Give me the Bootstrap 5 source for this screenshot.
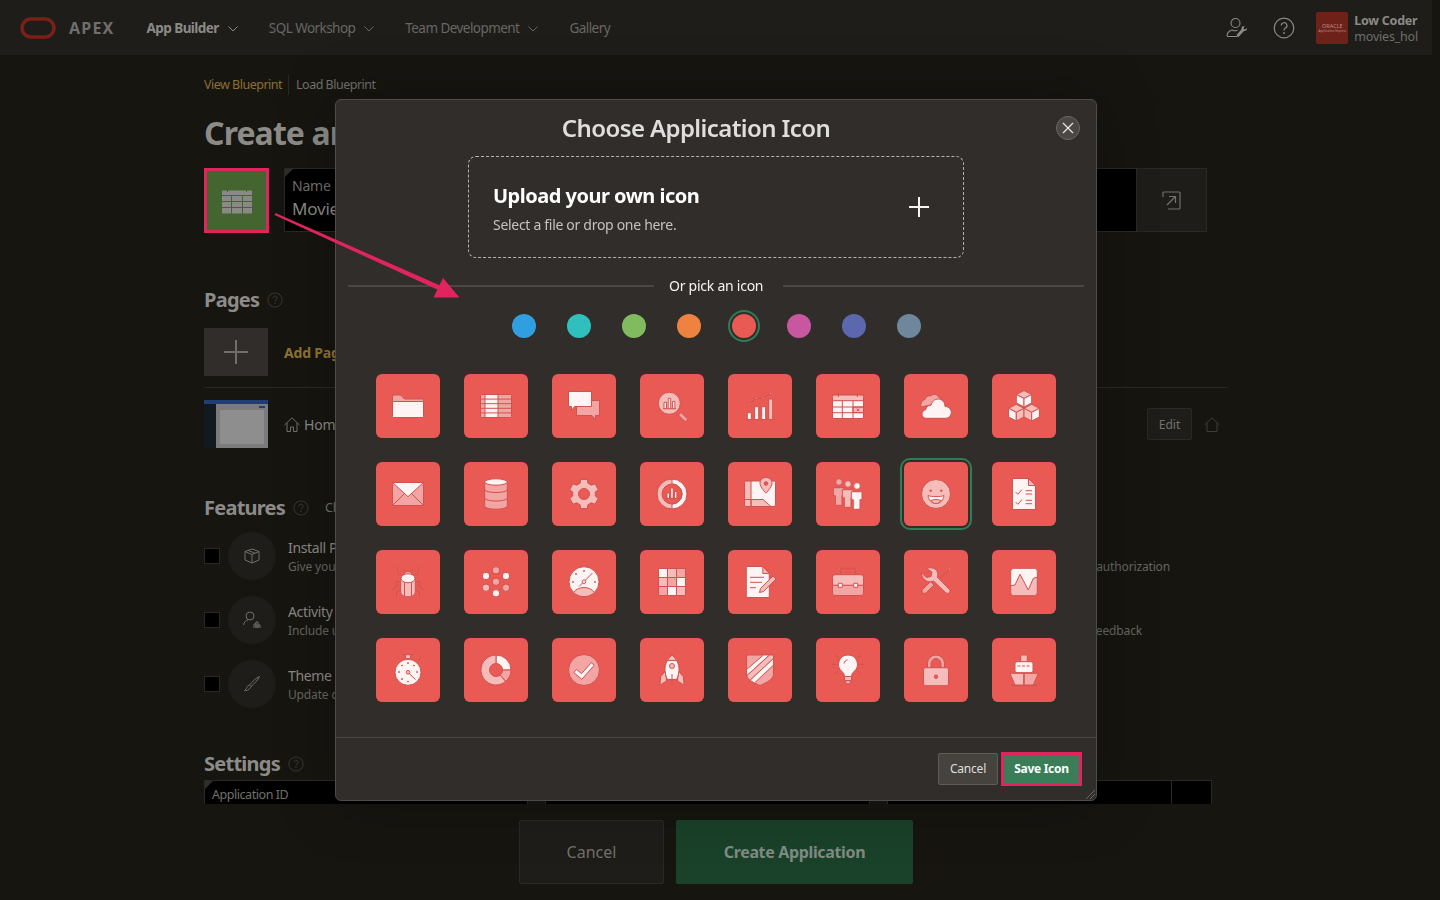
<!DOCTYPE html>
<html lang="en">
<head>
    <meta charset="UTF-8">
    <title>Create an Application</title>
    <link href="https://cdn.jsdelivr.net/npm/bootstrap@5.3.0/dist/css/bootstrap.min.css" rel="stylesheet">
    <style>
        html, body { height: 100%; }
        body { background: #161510; font-family: "Noto Sans", "Liberation Sans", sans-serif; color: #8a8985; overflow: hidden; }
        .shell { width: 1432px; height: 900px; }

        /* top bar */
        .top-bar { height: 55px; background: #1e1d1a; padding: 1px 14px 0 20px; }
        .apex-word { font-size: 16px; font-weight: 700; letter-spacing: 1.2px; color: #6f6e6a; margin: 0 32px 0 13px; }
        .top-item { font-size: 13.5px; color: #686763; letter-spacing: -.55px; }
        .top-item.is-active { color: #8b8a86; font-weight: 700; letter-spacing: -.55px; }
        .top-nav { gap: 31px; }
        .top-item svg { margin-left: 9px; }
        .wrench-icon { margin-right: 25px; }
        .help-icon { margin-right: 21px; color: #8a8985; }
        .user-name { font-size: 12.5px; font-weight: 700; line-height: 17px; color: #8b8a86; letter-spacing: -.25px; }
        .user-app { font-size: 12.5px; line-height: 16px; color: #6f6e6a; letter-spacing: -.2px; }
        .org-badge { width: 32px; height: 32px; margin-right: 6px; background: #6e2119; border-radius: 2px; color: #b98f8a; }
        .org-top { font-size: 5.5px; line-height: 5px; }
        .org-bot { font-size: 3px; line-height: 4px; }

        /* dimmed page behind the dialog */
        .page-main { height: 749px; overflow: hidden; padding: 0 204px; }
        .tab-row { margin-top: 20px; height: 20px; font-size: 12.5px; line-height: 20px; letter-spacing: -.5px; }
        .tab-on { color: #8c7130; padding-right: 6px; border-right: 1px solid #2a2925; margin-right: 7px; }
        .tab-off { color: #72716d; }
        .page-title { margin: 18px 0 15px; font-size: 32px; line-height: 40px; font-weight: 700; color: #8c8b88; letter-spacing: -.9px; }
        .app-icon { width: 65px; height: 65px; background: #44652f; border: 3px solid #e0245e; }
        .black-field { position: relative; background: #000; border: 1px solid #2a2925; padding: 7px; }
        .black-field::before { content: ""; position: absolute; top: 0; left: 0; border-style: solid; border-width: 8px 8px 0 0; border-color: #2f2e2b transparent transparent transparent; }
        .name-field { width: 853px; height: 64px; margin-left: 15px; }
        .field-label { font-size: 14px; line-height: 20px; color: #72716d; letter-spacing: -.2px; }
        .field-value { font-size: 17px; line-height: 26px; color: #8a8985; letter-spacing: -.2px; }
        .pop-btn { width: 70px; height: 64px; background: #1e1d1a; border: 1px solid #2a2925; border-left: 0; }
        .sect-head { font-size: 20px; line-height: 28px; font-weight: 700; color: #8c8b88; letter-spacing: -.75px; }
        .pages-head { margin-top: 53px; }
        .add-row { margin-top: 14px; }
        .add-tile { width: 64px; height: 48px; background: #312d2a; }
        .add-link { margin-left: 16px; font-size: 14px; font-weight: 700; color: #8f742f; letter-spacing: -.2px; }
        .row-line { margin: 11px 0 12px; border-top: 1px solid #2a2925; }
        .thumb { width: 64px; height: 48px; background: #7b7b7b; border-top: 4px solid #1f3e72; padding: 6px 4px 4px 16px; position: relative; }
        .thumb::before { content: ""; position: absolute; left: 0; top: 0; bottom: 0; width: 12px; background: #121a20; }
        .thumb::after { content: ""; position: absolute; right: 3px; top: 2px; width: 6px; height: 2px; background: #1f3e72; }
        .thumb-inner { display: block; height: 100%; background: #8e8e8e; }
        .home-name { font-size: 14px; color: #8a8985; margin-left: 4px; letter-spacing: -.2px; }
        .edit-btn { width: 45px; height: 32px; background: #1e1d1a; border: 1px solid #2a2925; border-radius: 2px; font-size: 12px; line-height: 31px; text-align: center; color: #72716d; margin-right: 12px; }
        .features-head { margin-top: 46px; margin-bottom: 10px; }
        .check-all { font-size: 12.5px; font-weight: 400; color: #72716d; margin-left: 16px; letter-spacing: -.2px; }
        .feature-row { height: 48px; margin-bottom: 16px; }
        .fake-check { width: 16px; height: 16px; background: #000; border: 1px solid #2a2925; margin-right: 8px; }
        .feat-circle { width: 48px; height: 48px; border-radius: 50%; background: #1e1d1a; margin-right: 12px; }
        .feat-title { font-size: 14px; line-height: 20px; color: #8a8985; margin-top: 2px; letter-spacing: -.35px; }
        .feat-sub { font-size: 12px; line-height: 18px; color: #666561; letter-spacing: -.15px; }
        .end-a { margin-right: 58px; }
        .end-b { margin-right: 86px; }
        .settings-head { margin-top: 42px; margin-bottom: 2px; }
        .settings-row { margin-right: 16px; }
        .settings-field { height: 64px; font-size: 12.5px; color: #72716d; padding: 5px 7px; letter-spacing: -.45px; }
        .seg-a { width: 324px; margin-right: 17px; }
        .seg-b { width: 325px; margin-right: 17px; }
        .seg-c { width: 285px; }
        .seg-d { width: 40px; border-left: 0; }
        .seg-d::before { display: none; }
        .page-foot { height: 96px; padding-top: 16px; gap: 12px; }
        .foot-cancel { width: 145px; height: 64px; background: #1e1d1a; border: 1px solid #2a2925; border-radius: 2px; font-size: 16px; line-height: 62px; text-align: center; color: #72716d; }
        .foot-create { width: 237px; height: 64px; background: #1a412a; border-radius: 2px; font-size: 16px; font-weight: 700; line-height: 64px; text-align: center; color: #7f8b83; letter-spacing: -.35px; }

        /* dialog */
        .dlg-box { max-width: 762px; width: 762px; margin: 99px 0 0 335px; }
        .dlg-box .modal-content { height: 702px; background: #312d2a; border: 1px solid #4e4b48; border-radius: 6px; box-shadow: 0 0 60px rgba(0,0,0,.25); color: #fff; }
        .dlg-head { height: 56px; padding: 0 16px 0 0; border: 0; }
        .dlg-title { flex: 1; text-align: center; font-size: 24px; font-weight: 600; line-height: 32px; color: #dfdedc; letter-spacing: -.6px; margin: 0; }
        .dlg-close { width: 24px; height: 24px; padding: 0; border-radius: 50%; background: #4a4744; border: 1px solid #6b6865; }
        .upload-box { width: 496px; height: 102px; margin: 0 auto; border: 1px dashed #b5b3b0; border-radius: 8px; padding: 0 33px 0 24px; }
        .upload-copy { padding-top: 2px; }
        .upload-title { font-size: 20px; line-height: 28px; font-weight: 700; color: #fff; letter-spacing: -.5px; }
        .upload-sub { font-size: 14px; line-height: 20px; color: #c4c2bf; letter-spacing: -.3px; margin-top: 5px; }
        .or-row { margin: 16px 12px 0 12px; height: 24px; }
        .or-line { flex: 1; height: 2px; background: #4a4744; }
        .or-line-left { flex: 0 0 306px; }
        .or-text { margin: 0 20px 0 15px; padding-bottom: 2px; font-size: 14px; color: #f5f4f3; letter-spacing: -.25px; }
        .swatches { gap: 31px; margin-top: 16px; }
        .swatch { width: 24px; height: 24px; border-radius: 50%; border: 0; padding: 0; }
        .swatch.is-on { outline: 2px solid #2f7d57; outline-offset: 2px; }
        .tile-grid { display: grid; grid-template-columns: repeat(8, 64px); gap: 24px; justify-content: center; margin-top: 36px; }
        .tile { width: 64px; height: 64px; padding: 0; border: 0; border-radius: 6px; background: #ea5a55; display: block; }
        .tile.is-on { outline: 2px solid #2f7d57; outline-offset: 2px; }
        .tile svg { display: block; }
        .tile svg * { stroke: #d0524e; stroke-width: 1; stroke-linejoin: round; }
        .fa { fill: #fdf4f3; }
        .fb { fill: #f6bcb9; }
        .fc { fill: #f2a5a2; }
        .fn { fill: none; }
        .ft { fill: #ea5a55; }
        .fd { fill: #cc4f4b; }
        .dlg-foot { height: 63px; margin-top: 35px; padding: 0 14px 1px 0; border-top: 1px solid #4a4744; border-radius: 0; gap: 3px; flex-wrap: nowrap; }
        .dlg-foot > * { margin: 0; }
        .dlg-cancel { width: 60px; height: 32px; padding: 0; background: #46433f; border: 1px solid #5f5c59; border-radius: 2px; font-size: 12px; color: #dfdedc; letter-spacing: -.2px; }
        .dlg-save { width: 81px; height: 34px; padding: 0; background: #3a7d58; border: 3px solid #e0245e; border-radius: 0; font-size: 12px; font-weight: 700; color: #fff; letter-spacing: -.3px; }
        .grip { position: absolute; right: 1px; bottom: 1px; }
        .arrow-layer { position: fixed; top: 0; left: 0; z-index: 2000; pointer-events: none; }
    </style>
</head>
<body>
    <svg width="0" height="0" class="position-absolute">
        <symbol id="help" viewBox="0 0 18 18">
            <circle cx="9" cy="9" r="8" fill="none" stroke="currentColor"/>
            <path d="M6.8 7a2.3 2.3 0 1 1 3.4 2c-.8.5-1.2 1-1.2 2" fill="none" stroke="currentColor"/>
            <circle cx="9" cy="13" r=".8" fill="currentColor"/>
        </symbol>
        <symbol id="chev" viewBox="0 0 10 6">
            <path d="M.5.5L5 5 9.5.5" fill="none" stroke="currentColor"/>
        </symbol>
    </svg>

    <div class="shell d-flex flex-column">
        <header class="top-bar d-flex align-items-center">
            <svg width="36" height="22" viewBox="0 0 36 22"><rect x="2" y="2" width="32" height="18" rx="9" fill="none" stroke="#7a2018" stroke-width="3.5"/></svg>
            <span class="apex-word">APEX</span>
            <nav class="top-nav d-flex align-items-center">
                <span class="top-item is-active">App Builder<svg width="10" height="6"><use href="#chev"/></svg></span>
                <span class="top-item">SQL Workshop<svg width="10" height="6"><use href="#chev"/></svg></span>
                <span class="top-item">Team Development<svg width="10" height="6"><use href="#chev"/></svg></span>
                <span class="top-item">Gallery</span>
            </nav>
            <div class="ms-auto d-flex align-items-center">
                <svg width="22" height="22" viewBox="0 0 22 22" fill="none" stroke="#8a8985" stroke-width="1.1" class="wrench-icon">
                    <circle cx="9.5" cy="6" r="4.5"/>
                    <path d="M1 19c0-3.5 2-5 5-6 1 .6 4 .8 5.5.2M1 19.5h10"/>
                    <path d="M12 20.5l6-6.5c1.5.4 3.5-1 3-3l-2 1.5-1.5-1 1-2.5c-2-.2-3.5 1.3-3 3.3l-5 5.7z" fill="#8a8985" stroke="none"/>
                </svg>
                <svg width="22" height="22" class="help-icon"><use href="#help"/></svg>
                <div class="org-badge d-flex flex-column justify-content-center text-center"><span class="org-top">ORACLE</span><span class="org-bot">Application Express</span></div>
                <div>
                    <div class="user-name">Low Coder</div>
                    <div class="user-app">movies_hol</div>
                </div>
            </div>
        </header>

        <main class="page-main">
            <div class="tab-row d-flex"><span class="tab-on">View Blueprint</span><span class="tab-off">Load Blueprint</span></div>
            <h1 class="page-title">Create an Application</h1>

            <div class="d-flex">
                <div class="app-icon d-flex align-items-center justify-content-center">
                    <svg width="32" height="28" viewBox="0 0 32 28" fill="#8a8985" stroke="#44652f">
                        <path d="M.5 3h31v24H.5z"/>
                        <path d="M.5 8.500h31M.5 14.500h31M.5 20.500h31M10.500 8.500V27M21.500 8.500V27M6.500 0v5M25.500 0v5"/>
                    </svg>
                </div>
                <div class="black-field name-field">
                    <div class="field-label">Name</div>
                    <div class="field-value">Movies</div>
                </div>
                <div class="pop-btn d-flex align-items-center justify-content-center">
                    <svg width="19" height="19" viewBox="0 0 19 19" fill="none" stroke="#72716d" stroke-width="1.200">
                        <path d="M1 6V2a1 1 0 0 1 1-1h15a1 1 0 0 1 1 1v15a1 1 0 0 1-1 1H6"/>
                        <path d="M5 14L13 6M7 5.500h6.500V12"/>
                    </svg>
                </div>
            </div>

            <div class="sect-head pages-head d-flex align-items-center">Pages<svg class="ms-2" width="16" height="16" style="color:#3e3d39"><use href="#help"/></svg></div>
            <div class="d-flex align-items-center add-row">
                <div class="add-tile d-flex align-items-center justify-content-center">
                    <svg width="24" height="24" viewBox="0 0 24 24" stroke="#6f6e6a" stroke-width="2"><path d="M12 0v24M0 12h24"/></svg>
                </div>
                <span class="add-link">Add Page</span>
            </div>
            <div class="row-line"></div>
            <div class="d-flex align-items-center">
                <div class="thumb"><span class="thumb-inner"></span></div>
                <svg class="ms-3" width="16" height="15" viewBox="0 0 16 15" fill="none" stroke="#72716d"><path d="M.5 8L8 .8 15.500 8M3 6v8.500h3.500V10h3v4.500H13V6"/></svg>
                <span class="home-name">Home</span>
                <span class="edit-btn ms-auto">Edit</span>
                <svg class="me-2" width="16" height="15" viewBox="0 0 16 15" fill="none" stroke="#3e3d39"><path d="M.5 8L8 .8 15.500 8M3 6v8.500h10V6"/></svg>
            </div>

            <div class="sect-head features-head d-flex align-items-center">Features<svg class="ms-2" width="16" height="16" style="color:#3e3d39"><use href="#help"/></svg><span class="check-all">Check All</span></div>

            <div class="feature-row d-flex align-items-center">
                <span class="fake-check"></span>
                <span class="feat-circle d-flex align-items-center justify-content-center">
                    <svg width="16" height="16" viewBox="0 0 16 16" fill="none" stroke="#6f6e6a"><path d="M8 1l7 2.500v8.500L8 15 1 12V3.500zM1 3.500L8 6.500 15 3.500M8 6.500V15M4 2.300l7 3"/></svg>
                </span>
                <div>
                    <div class="feat-title">Install Progressive Web App</div>
                    <div class="feat-sub">Give your application a native feel</div>
                </div>
                <div class="ms-auto end-a">
                    <div class="feat-title">Access Control</div>
                    <div class="feat-sub">Incorporate role based user authorization</div>
                </div>
            </div>
            <div class="feature-row d-flex align-items-center">
                <span class="fake-check"></span>
                <span class="feat-circle d-flex align-items-center justify-content-center">
                    <svg width="18" height="18" viewBox="0 0 18 18" fill="none" stroke="#6f6e6a"><circle cx="7" cy="5" r="4"/><path d="M.5 14c.5-3 2.500-4.500 4.500-5M11 17v-4h2v4M13 17v-6h2v6M15 17v-3h2v3"/></svg>
                </span>
                <div>
                    <div class="feat-title">Activity Reporting</div>
                    <div class="feat-sub">Include usage reports for your application</div>
                </div>
                <div class="ms-auto end-b">
                    <div class="feat-title">Feedback</div>
                    <div class="feat-sub">Provide end users with a way to give feedback</div>
                </div>
            </div>
            <div class="feature-row d-flex align-items-center">
                <span class="fake-check"></span>
                <span class="feat-circle d-flex align-items-center justify-content-center">
                    <svg width="16" height="16" viewBox="0 0 16 16" fill="none" stroke="#6f6e6a"><path d="M15.500.5C12 2 8 6 5.500 9l1.500 1.500C10 8 14 4 15.500.5zM5.500 9c-2 .5-2.500 2-3 3.500L.5 14.500c2 .5 5-.5 6.500-4"/></svg>
                </span>
                <div>
                    <div class="feat-title">Theme Style Selection</div>
                    <div class="feat-sub">Update colors and styles</div>
                </div>
            </div>

            <div class="sect-head settings-head d-flex align-items-center">Settings<svg class="ms-2" width="16" height="16" style="color:#3e3d39"><use href="#help"/></svg></div>
            <div class="settings-row d-flex">
                <div class="black-field settings-field seg-a">Application ID</div>
                <div class="black-field settings-field seg-b"></div>
                <div class="black-field settings-field seg-c"></div>
                <div class="black-field settings-field seg-d"></div>
            </div>
        </main>

        <footer class="page-foot d-flex justify-content-center">
            <div class="foot-cancel">Cancel</div>
            <div class="foot-create">Create Application</div>
        </footer>
    </div>

    <div class="modal d-block">
        <div class="modal-dialog dlg-box">
            <div class="modal-content">
                <div class="modal-header dlg-head">
                    <h2 class="dlg-title">Choose Application Icon</h2>
                    <button type="button" class="dlg-close d-flex align-items-center justify-content-center" aria-label="Close">
                        <svg width="12" height="12" viewBox="0 0 12 12" stroke="#eceae8" stroke-width="1.200"><path d="M1 1l10 10M11 1L1 11"/></svg>
                    </button>
                </div>
                <div class="upload-box d-flex align-items-center justify-content-between">
                    <div class="upload-copy">
                        <div class="upload-title">Upload your own icon</div>
                        <div class="upload-sub">Select a file or drop one here.</div>
                    </div>
                    <svg width="22" height="22" viewBox="0 0 22 22" stroke="#f5f4f3" stroke-width="2"><path d="M11 1v20M1 11h20"/></svg>
                </div>
                <div class="or-row d-flex align-items-center">
                    <span class="or-line or-line-left"></span>
                    <span class="or-text">Or pick an icon</span>
                    <span class="or-line"></span>
                </div>
                <div class="swatches d-flex justify-content-center">
                    <button type="button" class="swatch" style="background:#2f9fe0"></button>
                    <button type="button" class="swatch" style="background:#2fbfbc"></button>
                    <button type="button" class="swatch" style="background:#80bb60"></button>
                    <button type="button" class="swatch" style="background:#ee8240"></button>
                    <button type="button" class="swatch is-on" style="background:#ea5a55"></button>
                    <button type="button" class="swatch" style="background:#c7589f"></button>
                    <button type="button" class="swatch" style="background:#5b68ae"></button>
                    <button type="button" class="swatch" style="background:#6f879c"></button>
                </div>

                <div class="tile-grid">
                    <!-- row 1 -->
                    <button type="button" class="tile"><svg width="64" height="64" viewBox="0 0 64 64">
                        <path class="fc" d="M16.500 23a2 2 0 0 1 2-2h6l4 4h19v4h-31z"/>
                        <path class="fa" d="M16.500 27.500h31v15a1 1 0 0 1-1 1h-29a1 1 0 0 1-1-1z"/>
                    </svg></button>
                    <button type="button" class="tile"><svg width="64" height="64" viewBox="0 0 64 64">
                        <rect class="fc" x="16.500" y="20.500" width="31" height="23" rx="1"/>
                        <rect class="fa" x="21" y="20.500" width="13" height="23"/>
                        <path class="fn" d="M16.500 25.100h31M16.500 29.700h31M16.500 34.300h31M16.500 38.900h31"/>
                    </svg></button>
                    <button type="button" class="tile"><svg width="64" height="64" viewBox="0 0 64 64">
                        <path class="fc" d="M24.500 26.500h23v15h-4v4.500l-3.500-4.500h-15.500z"/>
                        <path class="fa" d="M16.500 17.500h23v15h-17l-3 4v-4h-3z"/>
                    </svg></button>
                    <button type="button" class="tile"><svg width="64" height="64" viewBox="0 0 64 64">
                        <path class="fc" d="M38.500 41l2.500-2.500 6 6a1.800 1.800 0 0 1-2.500 2.500z"/>
                        <circle class="fb" cx="29.300" cy="29.300" r="11"/>
                        <path class="fn" d="M23 34.700h13"/>
                        <path class="fa" d="M24 28.300h2.500v6.400H24zM28.200 24.300h2.500v10.400h-2.500zM32.400 27.500h2.500v7.200h-2.500z"/>
                    </svg></button>
                    <button type="button" class="tile"><svg width="64" height="64" viewBox="0 0 64 64">
                        <path class="fn" d="M21.300 30l7-5.700h7l7-5M17.300 45.500H47"/>
                        <circle class="fb" cx="21.300" cy="30" r="1"/><circle class="fb" cx="28.300" cy="24.300" r="1"/><circle class="fb" cx="35.300" cy="24.300" r="1"/><circle class="fb" cx="42.300" cy="19.300" r="1"/>
                        <path class="fa" d="M19.300 38.700h4v6.800h-4zM26.700 32.700h4v12.800h-4zM33.700 32.700h4v12.800h-4z"/>
                        <path class="fb" d="M40.700 25h4v20.500h-4z"/>
                    </svg></button>
                    <button type="button" class="tile"><svg width="64" height="64" viewBox="0 0 64 64">
                        <rect class="fa" x="16.500" y="21" width="31" height="23.500" rx="1.500"/>
                        <path class="fb" d="M16.500 26.700V22.500a1.500 1.500 0 0 1 1.500-1.500h28a1.500 1.500 0 0 1 1.500 1.500v4.200z"/>
                        <path class="fb" d="M37 33h10.500v5.700H37z"/>
                        <path class="fn" d="M16.500 33h31M16.500 38.700h31M26.300 26.700v17.800M37 26.700v17.800M22.300 19v4M41.300 19v4M40.700 34.500l2.600 2.700M43.300 34.500l-2.600 2.700"/>
                    </svg></button>
                    <button type="button" class="tile"><svg width="64" height="64" viewBox="0 0 64 64">
                        <path class="fc" d="M17 33c-1-4 1.500-7 4-7.500.7-2.500 3.500-4.500 6-3.500 2-2.500 6-2.500 7.500 1 2.500.5 3 3 2 6z"/>
                        <path class="fa" d="M22 44.300c-2.500 0-4-2-4-4.200 0-2.300 1.500-4 3.700-4.300.3-3 2.700-4.800 5.300-4.500 1-3.500 3.500-6.300 7-6.300 4.200 0 7 3.300 7 7.500 3.500 0 6.300 2.700 6.300 6 0 3.500-2.500 5.800-5.300 5.800z"/>
                    </svg></button>
                    <button type="button" class="tile"><svg width="64" height="64" viewBox="0 0 64 64">
                        <path class="fb" d="M32 16.500l7.700 4-7.700 4-7.700-4z"/><path class="fa" d="M24.300 20.500l7.700 4v8.500l-7.700-4z"/><path class="fa" d="M39.700 20.500l-7.700 4v8.500l7.700-4z"/>
                        <path class="fb" d="M24.300 30.300l7.700 4-7.700 4-7.700-4z"/><path class="fa" d="M16.600 34.300l7.700 4V47l-7.700-4z"/><path class="fb" d="M32 34.300l-7.700 4V47l7.700-4z"/>
                        <path class="fb" d="M39.700 30.300l7.700 4-7.700 4-7.700-4z"/><path class="fb" d="M32 34.300l7.700 4V47l-7.700-4z"/><path class="fa" d="M47.400 34.300l-7.700 4V47l7.700-4z"/>
                    </svg></button>

                    <!-- row 2 -->
                    <button type="button" class="tile"><svg width="64" height="64" viewBox="0 0 64 64">
                        <rect class="fc" x="16.500" y="20.500" width="31" height="23" rx="1"/>
                        <path class="fn" d="M16.500 43.500L28 32M47.500 43.500L36 32"/>
                        <path class="fa" d="M16.500 20.500h31L32 34.700z"/>
                    </svg></button>
                    <button type="button" class="tile"><svg width="64" height="64" viewBox="0 0 64 64">
                        <path class="fc" d="M20.700 20v24c0 4.300 22.600 4.300 22.600 0V20z"/>
                        <path class="fn" d="M20.700 27.500c0 4 22.600 4 22.600 0M20.700 36c0 4 22.600 4 22.600 0"/>
                        <ellipse class="fa" cx="32" cy="20" rx="11.300" ry="3.200"/>
                    </svg></button>
                    <button type="button" class="tile"><svg width="64" height="64" viewBox="0 0 64 64">
                        <path class="fb" d="M28.600 17.400L35.400 17.400L35.900 21.200L39.400 23.200L43 21.800L46.300 27.600L43.300 30L43.300 34L46.300 36.400L43 42.200L39.400 40.800L35.900 42.800L35.400 46.600L28.600 46.600L28.100 42.800L24.600 40.800L21 42.200L17.700 36.400L20.700 34L20.700 30L17.700 27.600L21 21.800L24.600 23.200L28.100 21.200Z"/>
                        <circle class="ft" cx="32" cy="32" r="5.500"/>
                    </svg></button>
                    <button type="button" class="tile"><svg width="64" height="64" viewBox="0 0 64 64">
                        <circle class="fb" cx="32" cy="32" r="15"/>
                        <path class="fa" d="M32 17a15 15 0 0 1 0 30v-5a10 10 0 0 0 0-20z"/>
                        <circle class="ft" cx="32" cy="32" r="10"/>
                        <path class="fn" d="M24.500 36.300h15"/>
                        <path class="fa" d="M27 31h2.500v5.300H27zM30.700 26h2.500v10.300h-2.500zM34.400 29.500h2.500v6.800h-2.500z"/>
                    </svg></button>
                    <button type="button" class="tile"><svg width="64" height="64" viewBox="0 0 64 64">
                        <rect class="fa" x="16.500" y="19" width="31" height="25.500" rx="1.500"/>
                        <path class="fb" d="M16.500 20.500a1.500 1.500 0 0 1 1.500-1.500h5v18.500h-6.500z"/>
                        <path class="fb" d="M16.500 37.500h6.500v7h-5a1.500 1.500 0 0 1-1.500-1.500zM23 37.500h12l8 7H23z"/>
                        <path class="fb" d="M38 15.500c-3.800 0-6 2.700-6 5.700 0 4 6 10 6 10s6-6 6-10c0-3-2.200-5.700-6-5.700z"/>
                        <circle class="ft" cx="38" cy="21.500" r="1.800"/>
                    </svg></button>
                    <button type="button" class="tile"><svg width="64" height="64" viewBox="0 0 64 64">
                        <circle class="fc" cx="23" cy="20" r="3.400"/>
                        <path class="fc" d="M17.300 25.700H28v8h-2v9.600h-6.700v-9.600h-2z"/>
                        <circle class="fb" cx="32" cy="22" r="3.400"/>
                        <path class="fb" d="M26.300 27.700H37v8h-2v9.600h-6.700v-9.600h-2z"/>
                        <circle class="fa" cx="41" cy="24" r="3.400"/>
                        <path class="fa" d="M35.300 29.700H46v8h-2v9.600h-6.700v-9.600h-2z"/>
                    </svg></button>
                    <button type="button" class="tile is-on"><svg width="64" height="64" viewBox="0 0 64 64">
                        <circle class="fb" cx="32" cy="32" r="14.500"/>
                        <circle class="fd" cx="26.700" cy="28.700" r=".8"/><circle class="fd" cx="37.300" cy="28.700" r=".8"/>
                        <path class="fa" d="M24 33.500c3 1.500 13 1.500 16 0-.5 5-4 8-8 8s-7.500-3-8-8z"/>
                        <path class="fb" d="M26.800 38.500c2.800-1.200 7.600-1.200 10.400 0-1.500 2-3.300 3-5.200 3s-3.700-1-5.200-3z"/>
                    </svg></button>
                    <button type="button" class="tile"><svg width="64" height="64" viewBox="0 0 64 64">
                        <path class="fa" d="M20.500 16.500h16l7 7v24h-23z"/>
                        <path class="fb" d="M36.500 16.500v7h7z"/>
                        <path class="fn" d="M23.500 30l2.300 2.300 4.200-4.800M23.500 40l2.300 2.300 4.200-4.800M33.700 28.700h6.300M33.700 32h6.300M33.700 38.300h6.300M33.700 41.700h6.300"/>
                    </svg></button>

                    <!-- row 3 -->
                    <button type="button" class="tile"><svg width="64" height="64" viewBox="0 0 64 64">
                        <path class="fn" d="M20.300 16.500c1 1 1.500 2 1.500 5s3 3.500 3.500 3.500M43.700 16.500c-1 1-1.500 2-1.500 5s-3 3.500-3.500 3.500M24.700 32l-4.700-1 1 5-4.500 4M39.300 32l4.700-1-1 5 4.500 4M25 40l-4.500 2v5M39 40l4.500 2v5M29 22l-2-3.500M35 22l2-3.500"/>
                        <path class="fb" d="M32 21.700c-2 0-3.500 1.300-4 3-2 1-3.300 3-3.300 5v12c0 3 3 5 7.300 5s7.300-2 7.300-5v-12c0-2-1.300-4-3.300-5-.5-1.700-2-3-4-3z"/>
                        <path class="fc" d="M28.500 32v14M35.500 32v14"/>
                        <ellipse class="fa" cx="32" cy="28.300" rx="7" ry="4.500"/>
                    </svg></button>
                    <button type="button" class="tile"><svg width="64" height="64" viewBox="0 0 64 64">
                        <circle class="fc" cx="32" cy="20.300" r="3.700"/><circle class="fa" cx="42" cy="26" r="3.700"/><circle class="fc" cx="42" cy="37.700" r="3.700"/>
                        <circle class="fa" cx="32" cy="43.300" r="3.700"/><circle class="fb" cx="22" cy="37.700" r="3.700"/><circle class="fa" cx="22" cy="26" r="3.700"/>
                        <circle class="fc" cx="32" cy="31.700" r="3.700"/>
                    </svg></button>
                    <button type="button" class="tile"><svg width="64" height="64" viewBox="0 0 64 64">
                        <circle class="fa" cx="32" cy="31.700" r="15"/>
                        <path class="fb" d="M21.500 42.500c2-3 6-5 10.500-5s8.500 2 10.500 5c-2.700 2.500-6.500 4.200-10.500 4.200s-7.800-1.700-10.500-4.200z"/>
                        <path class="fn" d="M27 36.500L40.500 23"/>
                        <circle class="fa" cx="32" cy="31.700" r="1.800"/>
                        <circle class="fd" cx="32" cy="21" r=".5"/><circle class="fd" cx="24" cy="24" r=".5"/><circle class="fd" cx="21" cy="32" r=".5"/><circle class="fd" cx="43" cy="32" r=".5"/>
                    </svg></button>
                    <button type="button" class="tile"><svg width="64" height="64" viewBox="0 0 64 64">
                        <rect class="fa" x="18.500" y="18.500" width="9" height="9"/><rect class="fb" x="27.500" y="18.500" width="9" height="9"/><rect class="fc" x="36.500" y="18.500" width="9" height="9"/>
                        <rect class="fb" x="18.500" y="27.500" width="9" height="9"/><rect class="fc" x="27.500" y="27.500" width="9" height="9"/><rect class="fa" x="36.500" y="27.500" width="9" height="9"/>
                        <rect class="fc" x="18.500" y="36.500" width="9" height="9"/><rect class="fa" x="27.500" y="36.500" width="9" height="9"/><rect class="fb" x="36.500" y="36.500" width="9" height="9"/>
                    </svg></button>
                    <button type="button" class="tile"><svg width="64" height="64" viewBox="0 0 64 64">
                        <path class="fa" d="M18.300 16.500h16.500l6.500 7v24H18.300z"/>
                        <path class="fb" d="M34.800 16.500v7h6.500z"/>
                        <path class="fn" d="M22 27.300h14M22 32.300h12M22 37.700h6"/>
                        <path class="fb" d="M45 26l3 3-12.500 12.500-4 1 1-4z"/>
                    </svg></button>
                    <button type="button" class="tile"><svg width="64" height="64" viewBox="0 0 64 64">
                        <path class="fn" d="M24.500 24.700v-3.500a3 3 0 0 1 3-3h9a3 3 0 0 1 3 3v3.500"/>
                        <path class="fc" d="M16.500 35v8a2.500 2.500 0 0 0 2.500 2.500h26a2.500 2.500 0 0 0 2.500-2.500v-8z"/>
                        <path class="fb" d="M19 24.700h26a2.500 2.500 0 0 1 2.500 2.500v8h-31v-8a2.500 2.500 0 0 1 2.500-2.500z"/>
                        <rect class="fa" x="22.300" y="33.300" width="4" height="4"/>
                        <rect class="fa" x="37.700" y="33.300" width="4" height="4"/>
                    </svg></button>
                    <button type="button" class="tile"><svg width="64" height="64" viewBox="0 0 64 64">
                        <path class="fn" d="M33 31L44.500 20"/>
                        <circle class="fc" cx="45.300" cy="19" r="1.200"/>
                        <path class="fc" d="M18.500 39.500l8-8 3.500 3.500-8 8a2.500 2.500 0 0 1-3.500-3.500z"/>
                        <path class="fb" d="M22.500 18.500c4-1.500 8-.5 10 2 1.500 2 1.800 4.500.8 6.500L45.500 39.500a2.500 2.500 0 0 1-3.500 3.500L29.500 31c-3 1.500-6.500 1-9-1.500-2.500-2.500-3.500-5-3-6.500l5 4.500 4.500-1 1-4.500z"/>
                    </svg></button>
                    <button type="button" class="tile"><svg width="64" height="64" viewBox="0 0 64 64">
                        <rect class="fa" x="18.700" y="18.300" width="26.600" height="27.400" rx="3"/>
                        <path class="fb" d="M18.700 35.700L23 35L28 24.300L36.300 40L41.300 28.300L45.300 27.300V42.700a3 3 0 0 1-3 3H21.700a3 3 0 0 1-3-3z"/>
                    </svg></button>

                    <!-- row 4 -->
                    <button type="button" class="tile"><svg width="64" height="64" viewBox="0 0 64 64">
                        <path class="fn" d="M27 16.500h10M42 23l3-3.500"/>
                        <rect class="fb" x="29.500" y="16.700" width="5" height="4"/>
                        <circle class="fa" cx="32" cy="34.300" r="13"/>
                        <path class="fn" d="M32 34.300L39.500 41.500"/>
                        <circle class="fb" cx="32" cy="34.300" r="1.800"/>
                        <circle class="fd" cx="32" cy="25" r=".5"/><circle class="fd" cx="26" cy="27.500" r=".5"/><circle class="fd" cx="38" cy="27.500" r=".5"/><circle class="fd" cx="23" cy="34" r=".5"/><circle class="fd" cx="41" cy="34" r=".5"/><circle class="fd" cx="26" cy="41" r=".5"/><circle class="fd" cx="32" cy="43.500" r=".5"/>
                    </svg></button>
                    <button type="button" class="tile"><svg width="64" height="64" viewBox="0 0 64 64">
                        <path class="fa" d="M32 17A15 15 0 0 1 47 32H38.500A6.500 6.500 0 0 0 32 25.500z"/>
                        <path class="fc" d="M47 32A15 15 0 0 1 41.600 43.500L36.200 37A6.500 6.500 0 0 0 38.500 32z"/>
                        <path class="fb" d="M41.600 43.500A15 15 0 1 1 32 17V25.500A6.500 6.500 0 1 0 36.200 37z"/>
                    </svg></button>
                    <button type="button" class="tile"><svg width="64" height="64" viewBox="0 0 64 64">
                        <circle class="fc" cx="32" cy="32" r="15.500"/>
                        <path class="fa" d="M24.500 31.500l5 4.200 9.800-11 3 2.600-12.500 14-8-6.800z"/>
                    </svg></button>
                    <button type="button" class="tile"><svg width="64" height="64" viewBox="0 0 64 64">
                        <path class="fb" d="M25.500 33l-5 6-.5 8 6.500-4zM38.500 33l5 6 .5 8-6.500-4z"/>
                        <path class="fa" d="M32 17c-4.500 4-7 9-7 14 0 4 1 8 2.500 10.500h9c1.500-2.500 2.500-6.500 2.500-10.500 0-5-2.500-10-7-14z"/>
                        <path class="fb" d="M32 17c-2 1.700-3.500 3.500-4.700 5.500h9.400c-1.200-2-2.700-3.800-4.700-5.500z"/>
                        <circle class="fb" cx="32" cy="28" r="2.500"/>
                        <path class="fn" d="M32 36v11"/>
                    </svg></button>
                    <button type="button" class="tile"><svg width="64" height="64" viewBox="0 0 64 64">
                        <path class="fc" d="M18.500 17h27v19c0 5-6.500 8.500-13.500 11.500C25 44.500 18.500 41 18.500 36z"/>
                        <path class="fa" d="M18.500 31.500L35.500 17h6L18.500 38z"/>
                        <path class="fb" d="M18.500 38L41.500 17h4v3.500L22 42.300c-2.200-1.700-3.500-3.800-3.500-6.300z"/>
                        <path class="fa" d="M45.500 20.500V27L26.500 45l-4.500-2.700z"/>
                    </svg></button>
                    <button type="button" class="tile"><svg width="64" height="64" viewBox="0 0 64 64">
                        <path class="fn" d="M16 26.300h4M44 26.300h4M19 17l3.300 2.700M44.700 17l-3.400 2.700M19 36l3.300-3M44.700 36l-3.400-3"/>
                        <path class="fa" d="M32 17a9.300 9.300 0 0 0-6 16.500c1.700 1.500 2.300 3 2.500 5h7c.2-2 .8-3.500 2.500-5A9.300 9.300 0 0 0 32 17z"/>
                        <rect class="fb" x="28.500" y="38.500" width="7" height="4"/>
                        <path class="fc" d="M29.500 42.500h5v1.500a2 2 0 0 1-2 2h-1a2 2 0 0 1-2-2z"/>
                        <path class="fn" d="M28 25.500c.3-2 1.700-3.300 3.500-3.700"/>
                    </svg></button>
                    <button type="button" class="tile"><svg width="64" height="64" viewBox="0 0 64 64">
                        <path class="fc" d="M23.500 30v-4.500a8.500 8.500 0 0 1 17 0V30H37v-4.500a5 5 0 0 0-10 0V30z"/>
                        <rect class="fb" x="19.500" y="29.700" width="25" height="18" rx="2"/>
                        <circle class="ft" cx="32" cy="38.700" r="1.700"/>
                    </svg></button>
                    <button type="button" class="tile"><svg width="64" height="64" viewBox="0 0 64 64">
                        <rect class="fb" x="28.700" y="17" width="6.600" height="7"/>
                        <rect class="fa" x="23" y="23.700" width="18" height="11" rx="2"/>
                        <path class="fn" d="M25.500 28h13" stroke-dasharray="3 1.500"/>
                        <path class="fb" d="M18 35.300h14V47h-9z"/>
                        <path class="fc" d="M32 35.300h14.300L41.300 47H32z"/>
                        <path class="fn" d="M32 36v10M19 47.500h26"/>
                    </svg></button>
                </div>

                <div class="modal-footer dlg-foot">
                    <button type="button" class="dlg-cancel">Cancel</button>
                    <button type="button" class="dlg-save">Save Icon</button>
                </div>
                <svg class="grip" width="9" height="9" viewBox="0 0 9 9" stroke="#6b6865"><path d="M0 9l9-9M4 9l5-5"/></svg>
            </div>
        </div>
    </div>

    <!-- annotation arrow drawn on top of the whole screenshot -->
    <svg class="arrow-layer" width="1440" height="900" viewBox="0 0 1440 900">
        <path d="M275.500 212.900L443 286.700 441 291.300 274.500 215.100z" fill="#e0245e"/>
        <path d="M459.500 297.500L443 278 433.500 297.500z" fill="#e0245e"/>
    </svg>

    <script src="https://cdn.jsdelivr.net/npm/bootstrap@5.3.0/dist/js/bootstrap.bundle.min.js"></script>
</body>
</html>
